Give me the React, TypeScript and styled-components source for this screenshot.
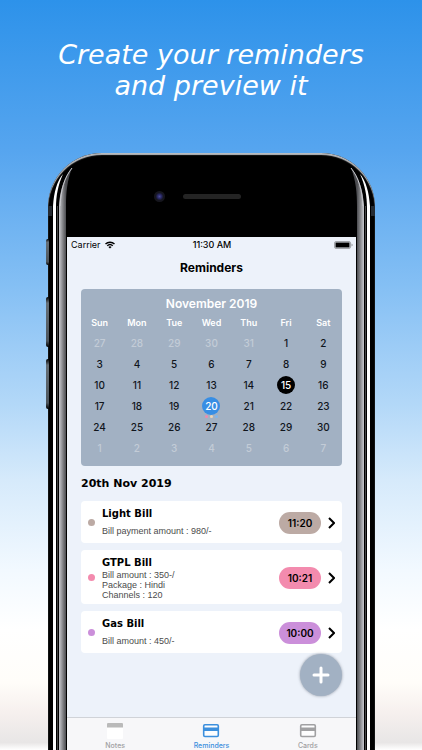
import React from "react";
import styled, { createGlobalStyle } from "styled-components";

const GlobalStyle = createGlobalStyle`
  * { box-sizing: border-box; }
  body { margin: 0; font-family: Inter, "Liberation Sans", sans-serif; color: #000; }
  button { font: inherit; color: inherit; border: 0; padding: 0; background: none; cursor: pointer; }
  h1, h2, h3, p { margin: 0; }
`;

const Page = styled.div`
  display: flex;
  flex-direction: column;
  height: 100vh;
  overflow: hidden;
  background: linear-gradient(180deg, #2d92ea 0%, #56a5ef 20%, #84bff4 38%, #b3d8f8 54%, #d6eafb 64%, #f2f9ff 76%, #fff 84%, #fffdf9 91%, #f6f0ee 95%, #e8e6e6 99%, #fff 100%);
`;

const Headline = styled.h1`
  flex: none;
  height: 153px;
  padding-top: 39px;
  color: #fff;
  font: italic 400 27px/31px "DejaVu Sans", sans-serif;
  text-align: center;
  white-space: pre-line;
`;

const Phone = styled.div`
  position: relative;
  flex: 1;
  min-height: 0;
  display: flex;
  flex-direction: column;
  margin: 0 47px 0 48px;
  padding: 0 19px;
  background: #000;
  border-radius: 54px 54px 0 0;
  box-shadow: inset 0 2px 1px #b9bcc0;
`;

const RailBox = styled.span<{ $side: "left" | "right" }>`
  position: absolute;
  top: 15px;
  bottom: 0;
  ${(p) => p.$side}: 4px;
  width: 22px;
  display: flex;
  flex-direction: column;
  transform: ${(p) => (p.$side === "right" ? "scaleX(-1)" : "none")};
  pointer-events: none;
`;

const RailBody = styled.span`
  flex: 1;
  width: 15px;
  background: linear-gradient(90deg, #000 0, #000 1px, #fff 1px, #fff 4px, #000 4px, #000 5px, #444 5px, #444 6px, #000 6px, #000 7px, #c9cacf 7px, #a5a6ab 9px, #7f8084 11px, #4b4c50 14px, #000 14px);
`;

const SideKey = styled.span<{ $top: number; $height: number }>`
  position: absolute;
  left: -2px;
  top: ${(p) => p.$top}px;
  width: 3px;
  height: ${(p) => p.$height}px;
  border-radius: 2px 0 0 2px;
  background: linear-gradient(#000, #667078 12%, #4d555c 88%, #000);
`;

const AntennaBand = styled.span<{ $side: "left" | "right" }>`
  position: absolute;
  ${(p) => p.$side}: 0;
  top: 53px;
  width: 4px;
  height: 10px;
  background: #252b32;
`;

const Forehead = styled.div`
  flex: none;
  height: 84px;
  padding-top: 34px;
  display: grid;
  grid-template-columns: 1fr 58px 1fr;
  align-items: start;
`;

const Camera = styled.span`
  justify-self: end;
  width: 11px;
  height: 11px;
  margin: 4px 18px 0 0;
  border-radius: 50%;
  background: radial-gradient(#4c4c9c 0, #25255c 30%, #15151e 50%, #17171c 100%);
`;

const Speaker = styled.span`
  height: 5px;
  margin-top: 7px;
  border-radius: 3px;
  background: #242424;
`;

const Screen = styled.main`
  flex: 1;
  min-height: 0;
  display: flex;
  flex-direction: column;
  background: #edf2fa;
`;

const StatusBar = styled.div`
  flex: none;
  display: grid;
  grid-template-columns: 1fr auto 1fr;
  align-items: center;
  height: 15px;
  padding: 0 3px 0 4px;
  font-size: 9px;
  font-weight: 500;
`;

const Carrier = styled.span`
  display: flex;
  align-items: center;
  gap: 4px;
  font-weight: 400;
`;

const BatterySlot = styled.span`
  display: flex;
  justify-content: flex-end;
`;

const Title = styled.h2`
  flex: none;
  height: 37px;
  font-size: 12px;
  line-height: 32px;
  font-weight: 700;
  text-align: center;
`;

const Content = styled.div`
  flex: 1;
  min-height: 0;
  padding: 0 14px;
`;

const Calendar = styled.section`
  height: 177px;
  padding-top: 6px;
  border-radius: 4px;
  background: #a2b1c3;
`;

const Month = styled.h3`
  color: #fff;
  font-size: 12px;
  line-height: 18px;
  font-weight: 600;
  text-align: center;
`;

const Days = styled.table`
  width: 100%;
  border-collapse: collapse;
  table-layout: fixed;
  text-align: center;
  th, td { padding: 0; }
`;

const Weekday = styled.th`
  height: 19px;
  color: #fff;
  font-size: 9px;
  font-weight: 600;
`;

const DayCell = styled.td`
  height: 21px;
  line-height: 18px;
`;

const dayColors = {
  plain: ["transparent", "#10151c"],
  muted: ["transparent", "#c3ccd7"],
  today: ["#000", "#fff"],
  selected: ["#378ee4", "#fff"],
};

const Day = styled.button<{ $kind: keyof typeof dayColors }>`
  && {
    position: relative;
    width: 18px;
    height: 18px;
    border-radius: 50%;
    font-size: 10px;
    font-weight: 500;
    line-height: 18px;
    vertical-align: middle;
    background: ${(p) => dayColors[p.$kind][0]};
    color: ${(p) => dayColors[p.$kind][1]};
  }
`;

const Dots = styled.span`
  position: absolute;
  left: 3px;
  top: 18px;
  display: flex;
  gap: 2px;
`;

const EventDot = styled.i<{ $color: string }>`
  flex: none;
  width: 3px;
  height: 3px;
  border-radius: 50%;
  background: ${(p) => p.$color};
`;

const DateHeading = styled.h3`
  padding: 10px 0 9px;
  font: 700 11px/16px "DejaVu Sans", sans-serif;
`;

const List = styled.ul`
  display: flex;
  flex-direction: column;
  gap: 7px;
  margin: 0;
  padding: 0;
  list-style: none;
`;

const Card = styled.li`
  display: flex;
  align-items: center;
  padding: 5px 7px 4px;
  border-radius: 4px;
  background: #fff;
`;

const Bullet = styled.span<{ $color: string }>`
  flex: none;
  width: 7px;
  height: 7px;
  margin-right: 7px;
  border-radius: 50%;
  background: ${(p) => p.$color};
`;

const CardText = styled.div`
  flex: 1;
  min-height: 33px;
  display: flex;
  flex-direction: column;
  justify-content: space-between;
`;

const CardTitle = styled.h3`
  font: 700 10px/15px "DejaVu Sans", sans-serif;
`;

const Note = styled.p<{ $multi: boolean }>`
  color: #4b4b4b;
  font: 400 9px/10px "Liberation Sans", sans-serif;
  padding-bottom: ${(p) => (p.$multi ? 0 : 3)}px;
  white-space: pre-line;
`;

const Time = styled.time<{ $color: string }>`
  flex: none;
  width: 42px;
  margin-right: 7px;
  border-radius: 11px;
  background: ${(p) => p.$color};
  font-size: 10px;
  line-height: 22px;
  font-weight: 600;
  text-align: center;
`;

const OpenButton = styled.button`
  display: flex;
`;

const AddRow = styled.div`
  display: flex;
  justify-content: flex-end;
  padding-top: 1px;
`;

const AddButton = styled.button`
  && {
    display: grid;
    place-items: center;
    width: 42px;
    height: 42px;
    border-radius: 50%;
    background: #a2b1c3;
    box-shadow: 0 0 3px rgba(80, 90, 105, 0.6);
  }
`;

const TabBar = styled.nav`
  flex: none;
  display: grid;
  grid-template-columns: repeat(3, 1fr);
  height: 33px;
  border-top: 1px solid #d0d3d8;
  background: #f7f7f9;
`;

const Tab = styled.a<{ $active?: boolean }>`
  display: flex;
  flex-direction: column;
  align-items: center;
  padding-top: 4px;
  gap: 3px;
  color: ${(p) => (p.$active ? "#3c8fdd" : "#a0a0a2")};
  font-size: 7px;
  line-height: 8px;
  font-weight: 500;
  text-decoration: none;
`;

const weekdays = ["Sun", "Mon", "Tue", "Wed", "Thu", "Fri", "Sat"];
const weeks = [
  [27, 28, 29, 30, 31, 1, 2],
  [3, 4, 5, 6, 7, 8, 9],
  [10, 11, 12, 13, 14, 15, 16],
  [17, 18, 19, 20, 21, 22, 23],
  [24, 25, 26, 27, 28, 29, 30],
  [1, 2, 3, 4, 5, 6, 7],
];

const kindOf = (week: number, day: number): keyof typeof dayColors => {
  if ((week === 0 && day > 20) || week === 5) return "muted";
  if (day === 15) return "today";
  if (day === 20) return "selected";
  return "plain";
};

const reminders = [
  { title: "Light Bill", note: "Bill payment amount : 980/-", time: "11:20", color: "#bcaaa4" },
  { title: "GTPL Bill", note: "Bill amount : 350-/\nPackage : Hindi\nChannels : 120", time: "10:21", color: "#f38bae" },
  { title: "Gas Bill", note: "Bill amount : 450/-", time: "10:00", color: "#cb8fda" },
];

const Rail = ({ side }: { side: "left" | "right" }) => (
  <RailBox $side={side}>
    <svg width="22" height="60" viewBox="0 0 22 60">
      <defs>
        <linearGradient id={`rail-${side}`} gradientUnits="userSpaceOnUse" x1="7" x2="14" y1="0" y2="0">
          <stop offset="0" stopColor="#c9cacf" />
          <stop offset=".5" stopColor="#88898d" />
          <stop offset="1" stopColor="#4b4c50" />
        </linearGradient>
      </defs>
      <path d="M7 60V38C8 22 12 9 20 0 15 13 14 25 14 38v22z" fill={`url(#rail-${side})`} />
      <path d="M8 38C9 22 12 10 20 0" fill="none" stroke="#c9cacf" />
      <path d="M1 60V38C2 24 5 13 11 6 6 17 4 28 4 40v20z" fill="#fff" />
      <path d="M5.500 60V38" stroke="#444" />
    </svg>
    <RailBody />
  </RailBox>
);

const Wifi = () => (
  <svg width="10" height="8" viewBox="0 0 20 16" fill="none" stroke="#000" strokeWidth="2.8">
    <path d="M1 6a13 13 0 0 1 18 0M4.5 9.5a8 8 0 0 1 11 0" />
    <path d="M10 15 6.8 11.8a4.6 4.6 0 0 1 6.4 0z" fill="#000" stroke="none" />
  </svg>
);

const Battery = () => (
  <svg width="19" height="8" viewBox="0 0 19 8">
    <rect x=".5" y=".5" width="16" height="7" rx="1.5" fill="#edf2fa" stroke="#a4a7ac" />
    <rect x="1.500" y="1.500" width="14" height="5" fill="#000" />
    <path d="M17.5 2.5v3l1-.8V3.300z" fill="#8d9096" />
  </svg>
);

const CardIcon = () => (
  <svg width="18" height="17" viewBox="0 0 18 17">
    <rect x="1.700" y="2.700" width="14.600" height="11.800" rx="1.200" fill="#fff" fillOpacity=".75" stroke="currentColor" strokeWidth="1.600" />
    <path d="M2 5.500h14v3.500H2z" fill="currentColor" />
  </svg>
);

const NotesIcon = () => (
  <svg width="18" height="17" viewBox="0 0 18 17">
    <rect x="1" y="1" width="16" height="16" rx="1" fill="#fff" />
    <path d="M1 5.500V2q0-1 1-1h14q1 0 1 1v3.500z" fill="#bababa" />
  </svg>
);

export default function App() {
  return (
    <>
      <GlobalStyle />
      <Page>
        <Headline>{"Create your reminders\nand preview it"}</Headline>
        <Phone>
          <Rail side="left" />
          <Rail side="right" />
          <AntennaBand $side="left" />
          <AntennaBand $side="right" />
          <SideKey $top={86} $height={26} />
          <SideKey $top={144} $height={50} />
          <SideKey $top={206} $height={50} />
          <Forehead>
            <Camera />
            <Speaker />
          </Forehead>
          <Screen>
            <StatusBar>
              <Carrier>Carrier <Wifi /></Carrier>
              <span>11:30 AM</span>
              <BatterySlot><Battery /></BatterySlot>
            </StatusBar>
            <Title>Reminders</Title>
            <Content>
              <Calendar>
                <Month>November 2019</Month>
                <Days>
                  <thead>
                    <tr>{weekdays.map((d) => <Weekday key={d} scope="col">{d}</Weekday>)}</tr>
                  </thead>
                  <tbody>
                    {weeks.map((week, w) => (
                      <tr key={w}>
                        {week.map((d) => {
                          const kind = kindOf(w, d);
                          return (
                            <DayCell key={d}>
                              <Day $kind={kind}>
                                {d}
                                {kind === "selected" && (
                                  <Dots>
                                    <EventDot $color="#f08bad" />
                                    <EventDot $color="#efd6b4" />
                                    <EventDot $color="#7fb6ee" />
                                  </Dots>
                                )}
                              </Day>
                            </DayCell>
                          );
                        })}
                      </tr>
                    ))}
                  </tbody>
                </Days>
              </Calendar>
              <DateHeading>20th Nov 2019</DateHeading>
              <List>
                {reminders.map((r) => (
                  <Card key={r.title}>
                    <Bullet $color={r.color} />
                    <CardText>
                      <CardTitle>{r.title}</CardTitle>
                      <Note $multi={r.note.includes("\n")}>{r.note}</Note>
                    </CardText>
                    <Time $color={r.color}>{r.time}</Time>
                    <OpenButton aria-label={`Open ${r.title}`}>
                      <svg width="7" height="12" viewBox="0 0 7 12" fill="none" stroke="#000" strokeWidth="2">
                        <path d="m1 1 5 5-5 5" />
                      </svg>
                    </OpenButton>
                  </Card>
                ))}
              </List>
              <AddRow>
                <AddButton aria-label="Add reminder">
                  <svg width="18" height="18" viewBox="0 0 18 18" stroke="#fff" strokeWidth="3" strokeLinecap="round">
                    <path d="M9 2v14M2 9h14" />
                  </svg>
                </AddButton>
              </AddRow>
            </Content>
            <TabBar>
              <Tab href="#notes"><NotesIcon />Notes</Tab>
              <Tab href="#reminders" $active aria-current="page"><CardIcon />Reminders</Tab>
              <Tab href="#cards"><CardIcon />Cards</Tab>
            </TabBar>
          </Screen>
        </Phone>
      </Page>
    </>
  );
}
